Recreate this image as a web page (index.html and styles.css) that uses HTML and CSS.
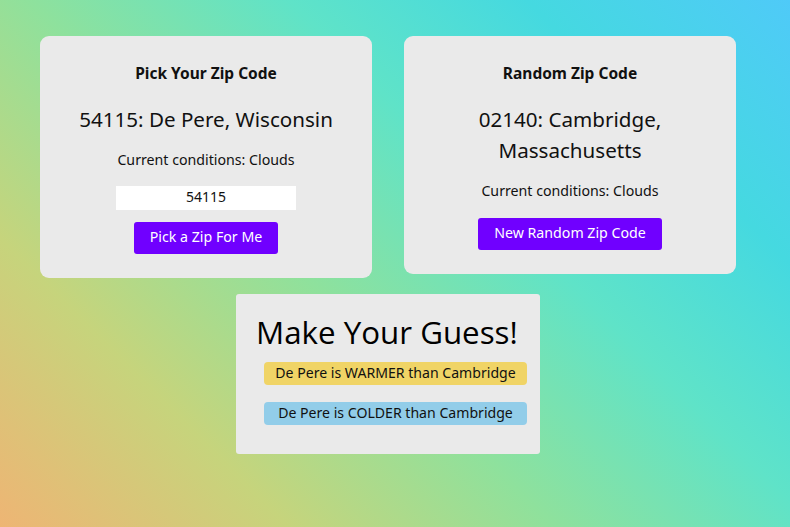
FILE: index.html
```html
<!DOCTYPE html>
<html>
<head>
<meta charset="utf-8">
<link rel="stylesheet" href="styles.css">
</head>
<body>
<main class="page">
  <div class="row">
    <section class="card">
      <h3 class="card-title">Pick Your Zip Code</h3>
      <h2 class="place">54115: De Pere, Wisconsin</h2>
      <p class="cond">Current conditions: Clouds</p>
      <input class="zip" type="text" value="54115">
      <button class="btn">Pick a Zip For Me</button>
    </section>
    <section class="card">
      <h3 class="card-title">Random Zip Code</h3>
      <h2 class="place">02140: Cambridge,<br>Massachusetts</h2>
      <p class="cond">Current conditions: Clouds</p>
      <button class="btn">New Random Zip Code</button>
    </section>
  </div>
  <section class="guess">
    <h1 class="guess-title">Make Your Guess!</h1>
    <button class="choice warm">De Pere is WARMER than Cambridge</button>
    <button class="choice cold">De Pere is COLDER than Cambridge</button>
  </section>
</main>
</body>
</html>
```

FILE: styles.css
```css
html, body {
  margin: 0;
  height: 100%;
}
body {
  background: linear-gradient(45deg, #eeb574 0%, #c6d47c 22%, #8fe19c 42%, #5fe3c8 62%, #45d9e0 80%, #4fcaf8 100%);
  font-family: "Noto Sans", sans-serif;
  color: #111;
}
.page {
  width: 776px;
  padding-top: 36px;
  display: flex;
  flex-direction: column;
  align-items: center;
}
.row {
  display: flex;
  align-items: flex-start;
  gap: 32px;
}
.card {
  width: 332px;
  box-sizing: border-box;
  background: #eaeaea;
  border-radius: 9px;
  padding: 24px 20px;
  display: flex;
  flex-direction: column;
  align-items: center;
  text-align: center;
}
.card-title {
  margin: 0;
  font-size: 15.5px;
  font-weight: 700;
  line-height: 26px;
}
.place {
  margin: 18px 0 0;
  font-size: 20.6px;
  font-weight: 400;
  line-height: 31px;
}
.cond {
  margin: 13px 0 0;
  font-size: 14.2px;
  line-height: 24px;
}
.zip {
  margin: 14px 0 0;
  width: 180px;
  height: 24px;
  box-sizing: border-box;
  border: none;
  background: #fff;
  text-align: center;
  font-family: "Noto Sans", sans-serif;
  font-size: 14px;
  color: #111;
  padding: 0 0 3px;
}
.btn {
  margin-top: 12px;
  height: 32px;
  padding: 0 16px 3px;
  border: none;
  border-radius: 3px;
  background: #7000ff;
  color: #fff;
  font-family: "Noto Sans", sans-serif;
  font-size: 14.2px;
}
.card .cond + .btn {
  margin-top: 15px;
}
.guess {
  margin-top: 16px;
  width: 304px;
  height: 160px;
  box-sizing: border-box;
  background: #eaeaea;
  border-radius: 3px;
  padding: 18px 13px 0 20px;
  display: flex;
  flex-direction: column;
  align-items: flex-start;
}
.guess-title {
  margin: 0;
  font-family: "Open Sans", sans-serif;
  font-size: 31.3px;
  font-weight: 400;
  line-height: 40px;
  color: #000;
}
.choice {
  margin: 10px 0 0 8px;
  width: 263px;
  height: 23px;
  border: none;
  border-radius: 4px;
  font-family: "Noto Sans", sans-serif;
  font-size: 14.1px;
  color: #111;
  padding: 0 0 2px;
}
.warm {
  background: #f0d466;
}
.cold {
  margin-top: 17px;
  background: #92cde9;
}
```
